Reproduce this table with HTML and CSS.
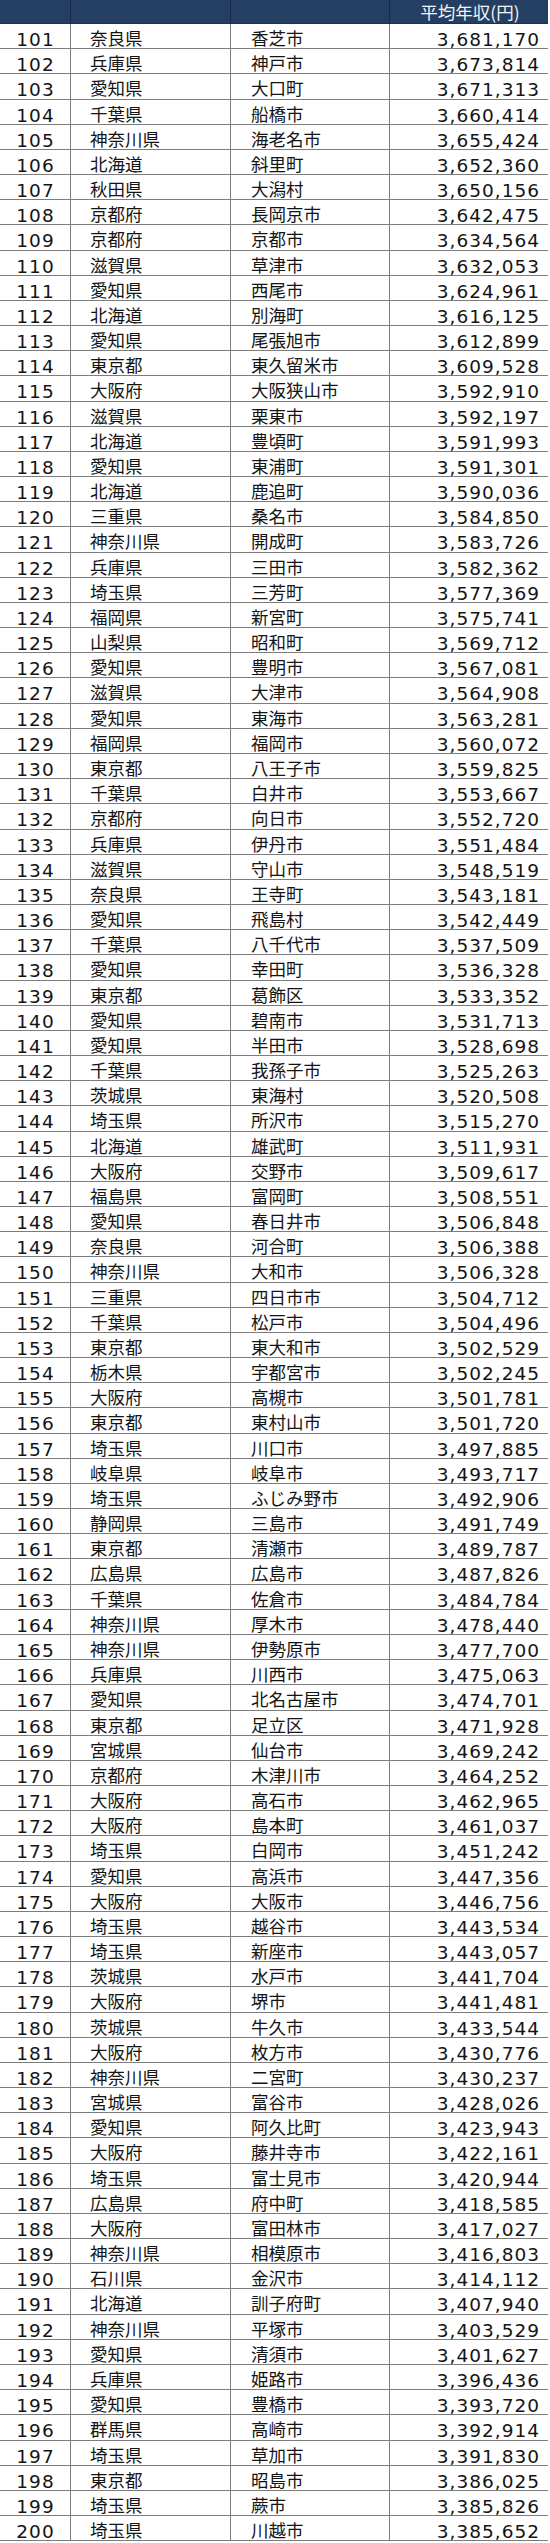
FILE: index.html
```html
<!DOCTYPE html>
<html lang="ja">
<head>
<meta charset="utf-8">
<title>平均年収ランキング</title>
<link rel="stylesheet" href="styles.css">
</head>
<body>
<div class="table">
<div class="row head"><div class="c rank"></div><div class="c pref"></div><div class="c city"></div><div class="c num">平均年収(円)</div></div>
<div class="row"><div class="c rank">101</div><div class="c pref">奈良県</div><div class="c city">香芝市</div><div class="c num">3,681,170</div></div>
<div class="row"><div class="c rank">102</div><div class="c pref">兵庫県</div><div class="c city">神戸市</div><div class="c num">3,673,814</div></div>
<div class="row"><div class="c rank">103</div><div class="c pref">愛知県</div><div class="c city">大口町</div><div class="c num">3,671,313</div></div>
<div class="row"><div class="c rank">104</div><div class="c pref">千葉県</div><div class="c city">船橋市</div><div class="c num">3,660,414</div></div>
<div class="row"><div class="c rank">105</div><div class="c pref">神奈川県</div><div class="c city">海老名市</div><div class="c num">3,655,424</div></div>
<div class="row"><div class="c rank">106</div><div class="c pref">北海道</div><div class="c city">斜里町</div><div class="c num">3,652,360</div></div>
<div class="row"><div class="c rank">107</div><div class="c pref">秋田県</div><div class="c city">大潟村</div><div class="c num">3,650,156</div></div>
<div class="row"><div class="c rank">108</div><div class="c pref">京都府</div><div class="c city">長岡京市</div><div class="c num">3,642,475</div></div>
<div class="row"><div class="c rank">109</div><div class="c pref">京都府</div><div class="c city">京都市</div><div class="c num">3,634,564</div></div>
<div class="row"><div class="c rank">110</div><div class="c pref">滋賀県</div><div class="c city">草津市</div><div class="c num">3,632,053</div></div>
<div class="row"><div class="c rank">111</div><div class="c pref">愛知県</div><div class="c city">西尾市</div><div class="c num">3,624,961</div></div>
<div class="row"><div class="c rank">112</div><div class="c pref">北海道</div><div class="c city">別海町</div><div class="c num">3,616,125</div></div>
<div class="row"><div class="c rank">113</div><div class="c pref">愛知県</div><div class="c city">尾張旭市</div><div class="c num">3,612,899</div></div>
<div class="row"><div class="c rank">114</div><div class="c pref">東京都</div><div class="c city">東久留米市</div><div class="c num">3,609,528</div></div>
<div class="row"><div class="c rank">115</div><div class="c pref">大阪府</div><div class="c city">大阪狭山市</div><div class="c num">3,592,910</div></div>
<div class="row"><div class="c rank">116</div><div class="c pref">滋賀県</div><div class="c city">栗東市</div><div class="c num">3,592,197</div></div>
<div class="row"><div class="c rank">117</div><div class="c pref">北海道</div><div class="c city">豊頃町</div><div class="c num">3,591,993</div></div>
<div class="row"><div class="c rank">118</div><div class="c pref">愛知県</div><div class="c city">東浦町</div><div class="c num">3,591,301</div></div>
<div class="row"><div class="c rank">119</div><div class="c pref">北海道</div><div class="c city">鹿追町</div><div class="c num">3,590,036</div></div>
<div class="row"><div class="c rank">120</div><div class="c pref">三重県</div><div class="c city">桑名市</div><div class="c num">3,584,850</div></div>
<div class="row"><div class="c rank">121</div><div class="c pref">神奈川県</div><div class="c city">開成町</div><div class="c num">3,583,726</div></div>
<div class="row"><div class="c rank">122</div><div class="c pref">兵庫県</div><div class="c city">三田市</div><div class="c num">3,582,362</div></div>
<div class="row"><div class="c rank">123</div><div class="c pref">埼玉県</div><div class="c city">三芳町</div><div class="c num">3,577,369</div></div>
<div class="row"><div class="c rank">124</div><div class="c pref">福岡県</div><div class="c city">新宮町</div><div class="c num">3,575,741</div></div>
<div class="row"><div class="c rank">125</div><div class="c pref">山梨県</div><div class="c city">昭和町</div><div class="c num">3,569,712</div></div>
<div class="row"><div class="c rank">126</div><div class="c pref">愛知県</div><div class="c city">豊明市</div><div class="c num">3,567,081</div></div>
<div class="row"><div class="c rank">127</div><div class="c pref">滋賀県</div><div class="c city">大津市</div><div class="c num">3,564,908</div></div>
<div class="row"><div class="c rank">128</div><div class="c pref">愛知県</div><div class="c city">東海市</div><div class="c num">3,563,281</div></div>
<div class="row"><div class="c rank">129</div><div class="c pref">福岡県</div><div class="c city">福岡市</div><div class="c num">3,560,072</div></div>
<div class="row"><div class="c rank">130</div><div class="c pref">東京都</div><div class="c city">八王子市</div><div class="c num">3,559,825</div></div>
<div class="row"><div class="c rank">131</div><div class="c pref">千葉県</div><div class="c city">白井市</div><div class="c num">3,553,667</div></div>
<div class="row"><div class="c rank">132</div><div class="c pref">京都府</div><div class="c city">向日市</div><div class="c num">3,552,720</div></div>
<div class="row"><div class="c rank">133</div><div class="c pref">兵庫県</div><div class="c city">伊丹市</div><div class="c num">3,551,484</div></div>
<div class="row"><div class="c rank">134</div><div class="c pref">滋賀県</div><div class="c city">守山市</div><div class="c num">3,548,519</div></div>
<div class="row"><div class="c rank">135</div><div class="c pref">奈良県</div><div class="c city">王寺町</div><div class="c num">3,543,181</div></div>
<div class="row"><div class="c rank">136</div><div class="c pref">愛知県</div><div class="c city">飛島村</div><div class="c num">3,542,449</div></div>
<div class="row"><div class="c rank">137</div><div class="c pref">千葉県</div><div class="c city">八千代市</div><div class="c num">3,537,509</div></div>
<div class="row"><div class="c rank">138</div><div class="c pref">愛知県</div><div class="c city">幸田町</div><div class="c num">3,536,328</div></div>
<div class="row"><div class="c rank">139</div><div class="c pref">東京都</div><div class="c city">葛飾区</div><div class="c num">3,533,352</div></div>
<div class="row"><div class="c rank">140</div><div class="c pref">愛知県</div><div class="c city">碧南市</div><div class="c num">3,531,713</div></div>
<div class="row"><div class="c rank">141</div><div class="c pref">愛知県</div><div class="c city">半田市</div><div class="c num">3,528,698</div></div>
<div class="row"><div class="c rank">142</div><div class="c pref">千葉県</div><div class="c city">我孫子市</div><div class="c num">3,525,263</div></div>
<div class="row"><div class="c rank">143</div><div class="c pref">茨城県</div><div class="c city">東海村</div><div class="c num">3,520,508</div></div>
<div class="row"><div class="c rank">144</div><div class="c pref">埼玉県</div><div class="c city">所沢市</div><div class="c num">3,515,270</div></div>
<div class="row"><div class="c rank">145</div><div class="c pref">北海道</div><div class="c city">雄武町</div><div class="c num">3,511,931</div></div>
<div class="row"><div class="c rank">146</div><div class="c pref">大阪府</div><div class="c city">交野市</div><div class="c num">3,509,617</div></div>
<div class="row"><div class="c rank">147</div><div class="c pref">福島県</div><div class="c city">富岡町</div><div class="c num">3,508,551</div></div>
<div class="row"><div class="c rank">148</div><div class="c pref">愛知県</div><div class="c city">春日井市</div><div class="c num">3,506,848</div></div>
<div class="row"><div class="c rank">149</div><div class="c pref">奈良県</div><div class="c city">河合町</div><div class="c num">3,506,388</div></div>
<div class="row"><div class="c rank">150</div><div class="c pref">神奈川県</div><div class="c city">大和市</div><div class="c num">3,506,328</div></div>
<div class="row"><div class="c rank">151</div><div class="c pref">三重県</div><div class="c city">四日市市</div><div class="c num">3,504,712</div></div>
<div class="row"><div class="c rank">152</div><div class="c pref">千葉県</div><div class="c city">松戸市</div><div class="c num">3,504,496</div></div>
<div class="row"><div class="c rank">153</div><div class="c pref">東京都</div><div class="c city">東大和市</div><div class="c num">3,502,529</div></div>
<div class="row"><div class="c rank">154</div><div class="c pref">栃木県</div><div class="c city">宇都宮市</div><div class="c num">3,502,245</div></div>
<div class="row"><div class="c rank">155</div><div class="c pref">大阪府</div><div class="c city">高槻市</div><div class="c num">3,501,781</div></div>
<div class="row"><div class="c rank">156</div><div class="c pref">東京都</div><div class="c city">東村山市</div><div class="c num">3,501,720</div></div>
<div class="row"><div class="c rank">157</div><div class="c pref">埼玉県</div><div class="c city">川口市</div><div class="c num">3,497,885</div></div>
<div class="row"><div class="c rank">158</div><div class="c pref">岐阜県</div><div class="c city">岐阜市</div><div class="c num">3,493,717</div></div>
<div class="row"><div class="c rank">159</div><div class="c pref">埼玉県</div><div class="c city">ふじみ野市</div><div class="c num">3,492,906</div></div>
<div class="row"><div class="c rank">160</div><div class="c pref">静岡県</div><div class="c city">三島市</div><div class="c num">3,491,749</div></div>
<div class="row"><div class="c rank">161</div><div class="c pref">東京都</div><div class="c city">清瀬市</div><div class="c num">3,489,787</div></div>
<div class="row"><div class="c rank">162</div><div class="c pref">広島県</div><div class="c city">広島市</div><div class="c num">3,487,826</div></div>
<div class="row"><div class="c rank">163</div><div class="c pref">千葉県</div><div class="c city">佐倉市</div><div class="c num">3,484,784</div></div>
<div class="row"><div class="c rank">164</div><div class="c pref">神奈川県</div><div class="c city">厚木市</div><div class="c num">3,478,440</div></div>
<div class="row"><div class="c rank">165</div><div class="c pref">神奈川県</div><div class="c city">伊勢原市</div><div class="c num">3,477,700</div></div>
<div class="row"><div class="c rank">166</div><div class="c pref">兵庫県</div><div class="c city">川西市</div><div class="c num">3,475,063</div></div>
<div class="row"><div class="c rank">167</div><div class="c pref">愛知県</div><div class="c city">北名古屋市</div><div class="c num">3,474,701</div></div>
<div class="row"><div class="c rank">168</div><div class="c pref">東京都</div><div class="c city">足立区</div><div class="c num">3,471,928</div></div>
<div class="row"><div class="c rank">169</div><div class="c pref">宮城県</div><div class="c city">仙台市</div><div class="c num">3,469,242</div></div>
<div class="row"><div class="c rank">170</div><div class="c pref">京都府</div><div class="c city">木津川市</div><div class="c num">3,464,252</div></div>
<div class="row"><div class="c rank">171</div><div class="c pref">大阪府</div><div class="c city">高石市</div><div class="c num">3,462,965</div></div>
<div class="row"><div class="c rank">172</div><div class="c pref">大阪府</div><div class="c city">島本町</div><div class="c num">3,461,037</div></div>
<div class="row"><div class="c rank">173</div><div class="c pref">埼玉県</div><div class="c city">白岡市</div><div class="c num">3,451,242</div></div>
<div class="row"><div class="c rank">174</div><div class="c pref">愛知県</div><div class="c city">高浜市</div><div class="c num">3,447,356</div></div>
<div class="row"><div class="c rank">175</div><div class="c pref">大阪府</div><div class="c city">大阪市</div><div class="c num">3,446,756</div></div>
<div class="row"><div class="c rank">176</div><div class="c pref">埼玉県</div><div class="c city">越谷市</div><div class="c num">3,443,534</div></div>
<div class="row"><div class="c rank">177</div><div class="c pref">埼玉県</div><div class="c city">新座市</div><div class="c num">3,443,057</div></div>
<div class="row"><div class="c rank">178</div><div class="c pref">茨城県</div><div class="c city">水戸市</div><div class="c num">3,441,704</div></div>
<div class="row"><div class="c rank">179</div><div class="c pref">大阪府</div><div class="c city">堺市</div><div class="c num">3,441,481</div></div>
<div class="row"><div class="c rank">180</div><div class="c pref">茨城県</div><div class="c city">牛久市</div><div class="c num">3,433,544</div></div>
<div class="row"><div class="c rank">181</div><div class="c pref">大阪府</div><div class="c city">枚方市</div><div class="c num">3,430,776</div></div>
<div class="row"><div class="c rank">182</div><div class="c pref">神奈川県</div><div class="c city">二宮町</div><div class="c num">3,430,237</div></div>
<div class="row"><div class="c rank">183</div><div class="c pref">宮城県</div><div class="c city">富谷市</div><div class="c num">3,428,026</div></div>
<div class="row"><div class="c rank">184</div><div class="c pref">愛知県</div><div class="c city">阿久比町</div><div class="c num">3,423,943</div></div>
<div class="row"><div class="c rank">185</div><div class="c pref">大阪府</div><div class="c city">藤井寺市</div><div class="c num">3,422,161</div></div>
<div class="row"><div class="c rank">186</div><div class="c pref">埼玉県</div><div class="c city">富士見市</div><div class="c num">3,420,944</div></div>
<div class="row"><div class="c rank">187</div><div class="c pref">広島県</div><div class="c city">府中町</div><div class="c num">3,418,585</div></div>
<div class="row"><div class="c rank">188</div><div class="c pref">大阪府</div><div class="c city">富田林市</div><div class="c num">3,417,027</div></div>
<div class="row"><div class="c rank">189</div><div class="c pref">神奈川県</div><div class="c city">相模原市</div><div class="c num">3,416,803</div></div>
<div class="row"><div class="c rank">190</div><div class="c pref">石川県</div><div class="c city">金沢市</div><div class="c num">3,414,112</div></div>
<div class="row"><div class="c rank">191</div><div class="c pref">北海道</div><div class="c city">訓子府町</div><div class="c num">3,407,940</div></div>
<div class="row"><div class="c rank">192</div><div class="c pref">神奈川県</div><div class="c city">平塚市</div><div class="c num">3,403,529</div></div>
<div class="row"><div class="c rank">193</div><div class="c pref">愛知県</div><div class="c city">清須市</div><div class="c num">3,401,627</div></div>
<div class="row"><div class="c rank">194</div><div class="c pref">兵庫県</div><div class="c city">姫路市</div><div class="c num">3,396,436</div></div>
<div class="row"><div class="c rank">195</div><div class="c pref">愛知県</div><div class="c city">豊橋市</div><div class="c num">3,393,720</div></div>
<div class="row"><div class="c rank">196</div><div class="c pref">群馬県</div><div class="c city">高崎市</div><div class="c num">3,392,914</div></div>
<div class="row"><div class="c rank">197</div><div class="c pref">埼玉県</div><div class="c city">草加市</div><div class="c num">3,391,830</div></div>
<div class="row"><div class="c rank">198</div><div class="c pref">東京都</div><div class="c city">昭島市</div><div class="c num">3,386,025</div></div>
<div class="row"><div class="c rank">199</div><div class="c pref">埼玉県</div><div class="c city">蕨市</div><div class="c num">3,385,826</div></div>
<div class="row"><div class="c rank">200</div><div class="c pref">埼玉県</div><div class="c city">川越市</div><div class="c num">3,385,652</div></div>
</div>
</body>
</html>
```
FILE: styles.css
```css
html, body {
  margin: 0;
  padding: 0;
  background: #ffffff;
}

.table {
  width: 548px;
  color: #141414;
}

.row {
  display: grid;
  grid-template-columns: 70px 160px 159px 159px;
  height: 25.18px;
  box-sizing: border-box;
  border-bottom: 1px solid #7c7c7c;
}

.c {
  box-sizing: border-box;
  min-height: 0;
  padding-top: 3px;
  line-height: 22px;
  white-space: nowrap;
}

.c + .c {
  border-left: 1px solid #7c7c7c;
}

.rank,
.num {
  font-family: "DejaVu Sans", sans-serif;
  font-size: 18.5px;
  letter-spacing: 1px;
  padding-top: 5px;
}

.rank {
  text-align: center;
  padding-left: 1px;
}

.num {
  text-align: right;
  padding-right: 8px;
}

.pref,
.city {
  font-family: "Noto Sans CJK JP", sans-serif;
  font-size: 17.5px;
}

.pref {
  padding-left: 19px;
}

.city {
  padding-left: 20px;
}

.head {
  height: 24px;
  background: #243f62;
  border-bottom: 1px solid #1b3150;
}

.head .c + .c {
  border-left: 1px solid #18294a;
}

.head .num {
  font-family: "Noto Sans CJK JP", sans-serif;
  font-size: 17.5px;
  letter-spacing: 0;
  text-align: center;
  color: #f2f4f8;
  padding: 1px 0 0 2px;
}
```
